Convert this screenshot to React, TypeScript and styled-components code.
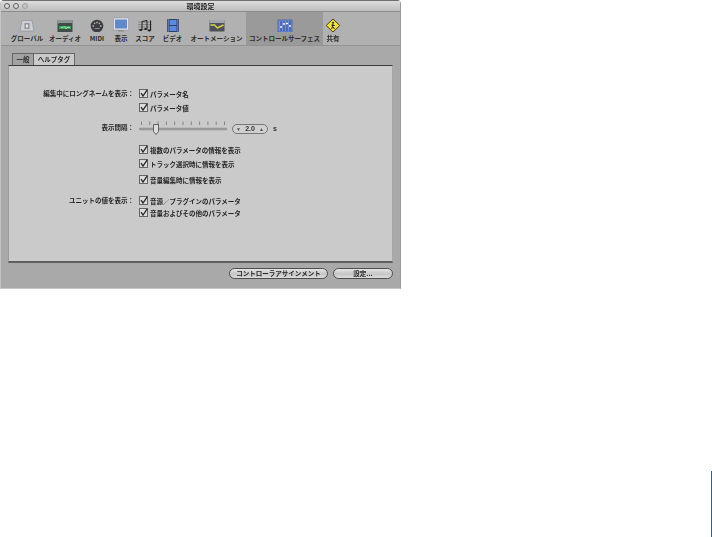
import React from "react";
import styled, { createGlobalStyle } from "styled-components";

const Global = createGlobalStyle`
  html, body { margin: 0; padding: 0; background: #fff; }
  body { font-family: "Noto Sans CJK JP", "Liberation Sans", sans-serif; width: 712px; height: 537px; overflow: hidden; position: relative; }
`;

const Page = styled.div`
  width: 712px;
  height: 537px;
  position: relative;
  overflow: hidden;
`;

const Window = styled.div`
  width: 401px;
  height: 289px;
  background: #a9a9a9;
  border-radius: 4px 4px 0 0;
  display: flex;
  flex-direction: column;
  box-sizing: border-box;
  border-top: 1px solid #6e6e6e;
  border-left: 1px solid #c4c4c4;
  border-right: 1px solid #9a9a9a;
  border-bottom: 1px solid #c4c4c4;
  filter: blur(0.35px);
`;

const TitleBar = styled.div`
  height: 10px;
  flex: none;
  display: flex;
  align-items: center;
  background: linear-gradient(#dcdcdc, #bdbdbd);
  border-bottom: 1px solid #8c8c8c;
  position: relative;
`;

const Lights = styled.div`
  display: flex;
  gap: 3px;
  padding-left: 3px;
`;

const Light = styled.span<{ $dim?: boolean }>`
  width: 6px;
  height: 6px;
  border-radius: 50%;
  box-sizing: border-box;
  border: 1px solid ${(p) => (p.$dim ? "#9f9f9f" : "#5f5f5f")};
  background: ${(p) => (p.$dim ? "#c4c4c4" : "#d8d8d8")};
`;

const Title = styled.span`
  position: absolute;
  left: 0;
  right: 0;
  text-align: center;
  font-size: 7px;
  line-height: 10px;
  font-weight: 700;
  color: #222;
`;

const Toolbar = styled.div`
  height: 33px;
  flex: none;
  display: flex;
  padding-left: 7px;
  background: #b1b1b1;
  border-bottom: 1px solid #939393;
`;

const ToolItem = styled.div<{ $w: number; $on?: boolean }>`
  width: ${(p) => p.$w}px;
  flex: none;
  display: flex;
  flex-direction: column;
  align-items: center;
  padding-top: 5px;
  box-sizing: border-box;
  background: ${(p) => (p.$on ? "#9a9a9a" : "transparent")};
`;

const ToolIcon = styled.svg`
  width: 16px;
  height: 15px;
  flex: none;
  display: block;
`;

const ToolLabel = styled.span`
  font-size: 6.5px;
  line-height: 9px;
  margin-top: 2px;
  font-weight: 700;
  color: #2e2e2e;
  white-space: nowrap;
`;

const Content = styled.div`
  flex: 1;
  display: flex;
  flex-direction: column;
  padding: 6px 7px 0 7px;
`;

const Tabs = styled.div`
  display: flex;
  height: 13px;
  padding-left: 4px;
  flex: none;
  align-items: flex-end;
`;

const Tab = styled.div<{ $on?: boolean }>`
  height: 12px;
  box-sizing: border-box;
  width: ${(p) => (p.$on ? 42 : 22)}px;
  text-align: center;
  font-size: 6.5px;
  line-height: 11px;
  font-weight: 700;
  color: #2a2a2a;
  background: ${(p) => (p.$on ? "#cacaca" : "#a2a2a2")};
  border: 1px solid #666;
  border-bottom: none;
  margin-left: ${(p) => (p.$on ? -1 : 0)}px;
`;

const Panel = styled.div`
  height: 198px;
  flex: none;
  box-sizing: border-box;
  background: #cacaca;
  border-top: 1px solid #3c3c3c;
  border-right: 1px solid #a5a5a5;
  border-bottom: 2px solid #5e5e5e;
  border-left: 1px solid #9c9c9c;
  display: grid;
  grid-template-columns: 125px 1fr;
  column-gap: 5px;
  align-content: start;
  padding-top: 21px;
`;

const Label = styled.div<{ $mt?: number }>`
  grid-column: 1;
  text-align: right;
  font-size: 6.5px;
  font-weight: 700;
  line-height: 13px;
  height: 13px;
  color: #262626;
  white-space: nowrap;
  margin-top: ${(p) => p.$mt ?? 0}px;
`;

const CheckRow = styled.div<{ $mt?: number }>`
  grid-column: 2;
  display: flex;
  align-items: center;
  gap: 2px;
  height: 13px;
  margin-top: ${(p) => p.$mt ?? 0}px;
  font-size: 6.5px;
  font-weight: 700;
  color: #262626;
  white-space: nowrap;
`;

const Check = styled.svg`
  width: 9px;
  height: 9px;
  flex: none;
  display: block;
`;

const SliderRow = styled.div<{ $mt?: number }>`
  grid-column: 2;
  height: 15px;
  margin-top: ${(p) => p.$mt ?? 0}px;
  display: flex;
  align-items: center;
  gap: 4px;
`;

const SliderDraw = styled.svg`
  width: 89px;
  height: 15px;
  flex: none;
  display: block;
`;

const Stepper = styled.div`
  width: 36px;
  height: 10px;
  flex: none;
  box-sizing: border-box;
  border: 1px solid #777;
  border-radius: 5px;
  background: #d0d0d0;
  display: flex;
  align-items: center;
  justify-content: space-between;
  padding: 0 3px;
  font-family: "Liberation Sans", sans-serif;
  font-size: 7px;
  font-weight: 700;
  color: #333;
`;

const Arrow = styled.span`
  font-size: 5px;
  line-height: 8px;
  color: #555;
`;

const Unit = styled.span`
  font-family: "Liberation Sans", sans-serif;
  font-size: 7px;
  font-weight: 700;
  color: #333;
  margin-left: 1px;
`;

const Footer = styled.div`
  display: flex;
  justify-content: flex-end;
  gap: 5px;
  padding: 5px 0 0 0;
`;

const Pill = styled.div<{ $w: number }>`
  width: ${(p) => p.$w}px;
  height: 11px;
  box-sizing: border-box;
  border: 1px solid #4e4e4e;
  border-radius: 6px;
  background: linear-gradient(#e4e4e4, #c6c6c6 55%, #dcdcdc);
  text-align: center;
  font-size: 6.5px;
  line-height: 9px;
  font-weight: 700;
  color: #262626;
  white-space: nowrap;
`;

const EdgeLine = styled.div`
  position: absolute;
  left: 711px;
  top: 471px;
  width: 1px;
  height: 66px;
  background: #1e66ad;
`;

const CheckBox = () => (
  <Check viewBox="0 0 9 9">
    <rect x="0.5" y="0.5" width="8" height="8" fill="#dcdcdc" stroke="#666" />
    <path d="M2 4.2 L4 7 L8.2 0.8" fill="none" stroke="#2b2b2b" strokeWidth="1.3" />
  </Check>
);

const icons: Record<string, React.ReactNode> = {
  global: (
    <>
      <path d="M3 3.5 L13 3.5 L15 14 L1 14 Z" fill="#ccd0d4" stroke="#84888c" strokeWidth="0.6" />
      <rect x="5.5" y="6" width="5" height="6" fill="#8e9296" />
      <rect x="7" y="7.5" width="2" height="3" fill="#e8eaec" />
    </>
  ),
  audio: (
    <>
      <rect x="0.5" y="3" width="15" height="12" fill="#3f4c48" />
      <rect x="0.5" y="3" width="15" height="3" fill="#8f9494" />
      <path d="M1.5 6.7 V6.2 M4 6.2 V6.2" stroke="#ddd" strokeWidth="0.5" />
      <path d="M2 10.5 H14" stroke="#39a85a" strokeWidth="3" />
      <path d="M4 10.5 H6 L7.5 9 L9 12 L10 10.5 H13" stroke="#b8e8b0" strokeWidth="0.8" fill="none" />
    </>
  ),
  midi: (
    <>
      <circle cx="8" cy="9" r="6.3" fill="#3a3d42" />
      <circle cx="4.3" cy="9" r="0.9" fill="#a8a8a8" />
      <circle cx="5.6" cy="6.3" r="0.9" fill="#a8a8a8" />
      <circle cx="10.4" cy="6.3" r="0.9" fill="#a8a8a8" />
      <circle cx="11.7" cy="9" r="0.9" fill="#a8a8a8" />
      <circle cx="8" cy="5.4" r="0.9" fill="#a8a8a8" />
      <rect x="5.5" y="11" width="5" height="1" fill="#8c8c8c" />
    </>
  ),
  display: (
    <>
      <rect x="0.5" y="1" width="15" height="12" fill="#e4e6ec" stroke="#8a8e98" strokeWidth="0.5" />
      <rect x="2" y="2.5" width="12" height="9" fill="#6288cc" />
      <rect x="5" y="13" width="6" height="1.5" fill="#8e8e8e" />
    </>
  ),
  score: (
    <>
      <path d="M1 5 H15 M1 7.5 H15 M1 10 H15 M1 12.5 H15" stroke="#6c6c6c" strokeWidth="0.6" />
      <path d="M5 13 V4.5 L10 3.5 V12 M13.5 13.5 V3.5" stroke="#222" strokeWidth="1" fill="none" />
      <ellipse cx="3.7" cy="13" rx="1.6" ry="1.1" fill="#222" />
      <ellipse cx="8.7" cy="12" rx="1.6" ry="1.1" fill="#222" />
      <ellipse cx="12.2" cy="13.5" rx="1.6" ry="1.1" fill="#222" />
    </>
  ),
  video: (
    <>
      <rect x="2" y="2" width="12" height="13" fill="#2e4068" />
      <rect x="4.5" y="3" width="7" height="5" fill="#5a8ae0" />
      <rect x="4.5" y="9" width="7" height="5" fill="#5a8ae0" />
      <path d="M3.2 2.5 V15 M12.8 2.5 V15" stroke="#c9d2e4" strokeWidth="1" strokeDasharray="1 1" />
    </>
  ),
  auto: (
    <>
      <rect x="0.5" y="3" width="15" height="11.5" fill="#4e5258" />
      <rect x="0.5" y="3" width="15" height="3" fill="#a4a8ae" />
      <path d="M1.5 8 L5.5 8 L8.5 11 L14.5 8" fill="none" stroke="#dcd24c" strokeWidth="1.4" />
    </>
  ),
  surface: (
    <>
      <rect x="1" y="3" width="14" height="12" fill="#6f90e0" stroke="#3c5aa0" strokeWidth="0.7" />
      <path d="M4 4 V14 M7 4 V14 M10 4 V14 M13 4 V14" stroke="#26355c" strokeWidth="0.8" />
      <path d="M3 10 H5 M6 7 H8 M9 6.5 H11 M12 9 H14" stroke="#f2f5fb" strokeWidth="1.7" />
    </>
  ),
  share: (
    <>
      <path d="M8 2 L14.8 8.5 L8 15 L1.2 8.5 Z" fill="#efdc3e" stroke="#4a4418" strokeWidth="1" />
      <path d="M8 5 L11.5 8.5 L8 12 L4.5 8.5 Z" fill="#f3e65a" />
      <circle cx="8" cy="5.8" r="1" fill="#222" />
      <path d="M8 7 L7.6 9.5 L6.6 12 M7.6 9.5 L9.6 12 M6.3 8.2 L9.8 8.6" fill="none" stroke="#222" strokeWidth="1" />
    </>
  ),
};

const tools = [
  { k: "global", t: "グローバル", w: 38 },
  { k: "audio", t: "オーディオ", w: 38 },
  { k: "midi", t: "MIDI", w: 26 },
  { k: "display", t: "表示", w: 22 },
  { k: "score", t: "スコア", w: 26 },
  { k: "video", t: "ビデオ", w: 29 },
  { k: "auto", t: "オートメーション", w: 59 },
  { k: "surface", t: "コントロールサーフェス", w: 77, on: true },
  { k: "share", t: "共有", w: 20 },
];

const ticks = Array.from({ length: 11 }, (_, i) => 2.5 + i * 8.3);

export default function App() {
  return (
    <Page>
      <Global />
      <Window>
        <TitleBar>
          <Lights>
            <Light />
            <Light />
            <Light $dim />
          </Lights>
          <Title>環境設定</Title>
        </TitleBar>
        <Toolbar>
          {tools.map((x) => (
            <ToolItem key={x.k} $w={x.w} $on={x.on}>
              <ToolIcon viewBox="0 0 16 15">{icons[x.k]}</ToolIcon>
              <ToolLabel>{x.t}</ToolLabel>
            </ToolItem>
          ))}
        </Toolbar>
        <Content>
          <Tabs>
            <Tab>一般</Tab>
            <Tab $on>ヘルプタグ</Tab>
          </Tabs>
          <Panel>
            <Label>編集中にロングネームを表示：</Label>
            <CheckRow><CheckBox />パラメータ名</CheckRow>
            <CheckRow $mt={1}><CheckBox />パラメータ値</CheckRow>
            <Label $mt={7}>表示間隔：</Label>
            <SliderRow $mt={7}>
              <SliderDraw viewBox="0 0 89 15">
                {ticks.map((t) => (
                  <line key={t} x1={t} x2={t} y1="0.5" y2="4" stroke="#666" strokeWidth="0.7" />
                ))}
                <rect x="0" y="7" width="88" height="2" rx="1" fill="#9c9c9c" stroke="#888" strokeWidth="0.4" />
                <path d="M14.5 3.5 H19.5 V10.5 L17 13.5 L14.5 10.5 Z" fill="#dcdcdc" stroke="#555" strokeWidth="0.9" />
              </SliderDraw>
              <Stepper>
                <Arrow>▼</Arrow>
                2.0
                <Arrow>▲</Arrow>
              </Stepper>
              <Unit>s</Unit>
            </SliderRow>
            <CheckRow $mt={7}><CheckBox />複数のパラメータの情報を表示</CheckRow>
            <CheckRow $mt={1}><CheckBox />トラック選択時に情報を表示</CheckRow>
            <CheckRow $mt={3}><CheckBox />音量編集時に情報を表示</CheckRow>
            <Label $mt={8}>ユニットの値を表示：</Label>
            <CheckRow $mt={8}><CheckBox />音源／プラグインのパラメータ</CheckRow>
            <CheckRow $mt={-1}><CheckBox />音量およびその他のパラメータ</CheckRow>
          </Panel>
          <Footer>
            <Pill $w={99}>コントローラアサインメント</Pill>
            <Pill $w={60}>設定...</Pill>
          </Footer>
        </Content>
      </Window>
      <EdgeLine />
    </Page>
  );
}
